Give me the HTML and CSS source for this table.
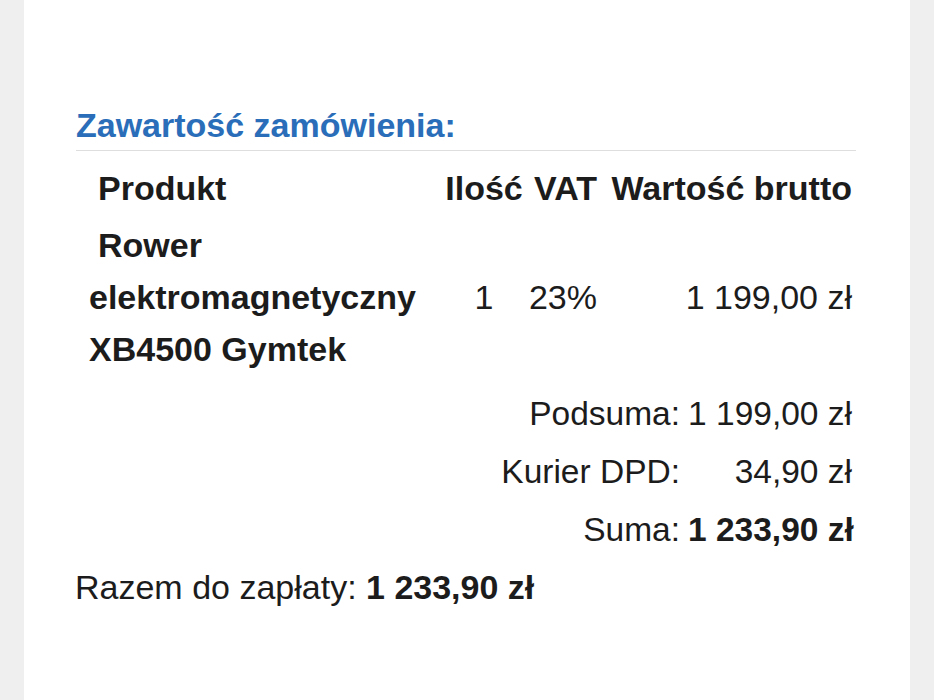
FILE: index.html
```html
<!DOCTYPE html>
<html lang="pl">
<head>
<meta charset="utf-8">
<title>Zawartość zamówienia</title>
<link rel="stylesheet" href="styles.css">
</head>
<body>
<main class="card">
  <h2 class="title">Zawartość zamówienia:</h2>
  <div class="items">
    <div class="th th-product">Produkt</div>
    <div class="th th-qty">Ilość</div>
    <div class="th th-vat">VAT</div>
    <div class="th th-value">Wartość brutto</div>

    <div class="td td-product">Rower elektromagnetyczny XB4500 Gymtek</div>
    <div class="td td-qty">1</div>
    <div class="td td-vat">23%</div>
    <div class="td td-value">1 199,00 zł</div>
  </div>
  <div class="summary">
    <div class="s-label">Podsuma:</div>
    <div class="s-value">1 199,00 zł</div>
    <div class="s-label">Kurier DPD:</div>
    <div class="s-value">34,90 zł</div>
    <div class="s-label">Suma:</div>
    <div class="s-value strong">1 233,90 zł</div>
  </div>
  <p class="total">Razem do zapłaty: <strong>1 233,90 zł</strong></p>
</main>
</body>
</html>
```
FILE: styles.css
```css
html, body {
  margin: 0;
  padding: 0;
}
body {
  background: #efefef;
  font-family: "Liberation Sans", Arial, Helvetica, sans-serif;
  color: #1c1c1c;
}
.card {
  background: #ffffff;
  margin: 0 24px;
  min-height: 700px;
  box-sizing: border-box;
  padding: 105px 54px 0 52px;
}
.title {
  margin: 0;
  font-size: 34px;
  line-height: 40px;
  font-weight: bold;
  color: #2a6db9;
  padding-bottom: 5px;
  border-bottom: 1px solid #dedede;
}
.items {
  display: grid;
  grid-template-columns: 355px 80px 73px 255px;
  margin: 11px 0 0 13px;
  font-size: 34px;
  line-height: 52px;
  row-gap: 5px;
}
.th {
  font-weight: bold;
  white-space: nowrap;
}
.th-product {
  padding-left: 9px;
}
.th-qty, .td-qty {
  text-align: center;
}
.th-vat, .td-vat, .th-value, .td-value {
  text-align: right;
  white-space: nowrap;
}
.td {
  align-self: center;
}
.td-product {
  font-weight: bold;
  text-indent: 9px;
  padding-right: 20px;
}
.summary {
  display: grid;
  grid-template-columns: 1fr 164px;
  column-gap: 8px;
  row-gap: 6px;
  margin: 13px 4px 0 0;
  font-size: 33.5px;
  line-height: 52px;
}
.s-label, .s-value {
  text-align: right;
  white-space: nowrap;
}
.strong {
  font-weight: bold;
}
.total {
  margin: 5px 0 0 -1px;
  font-size: 34px;
  line-height: 52px;
  white-space: nowrap;
}
.total strong {
  font-weight: bold;
}
```
